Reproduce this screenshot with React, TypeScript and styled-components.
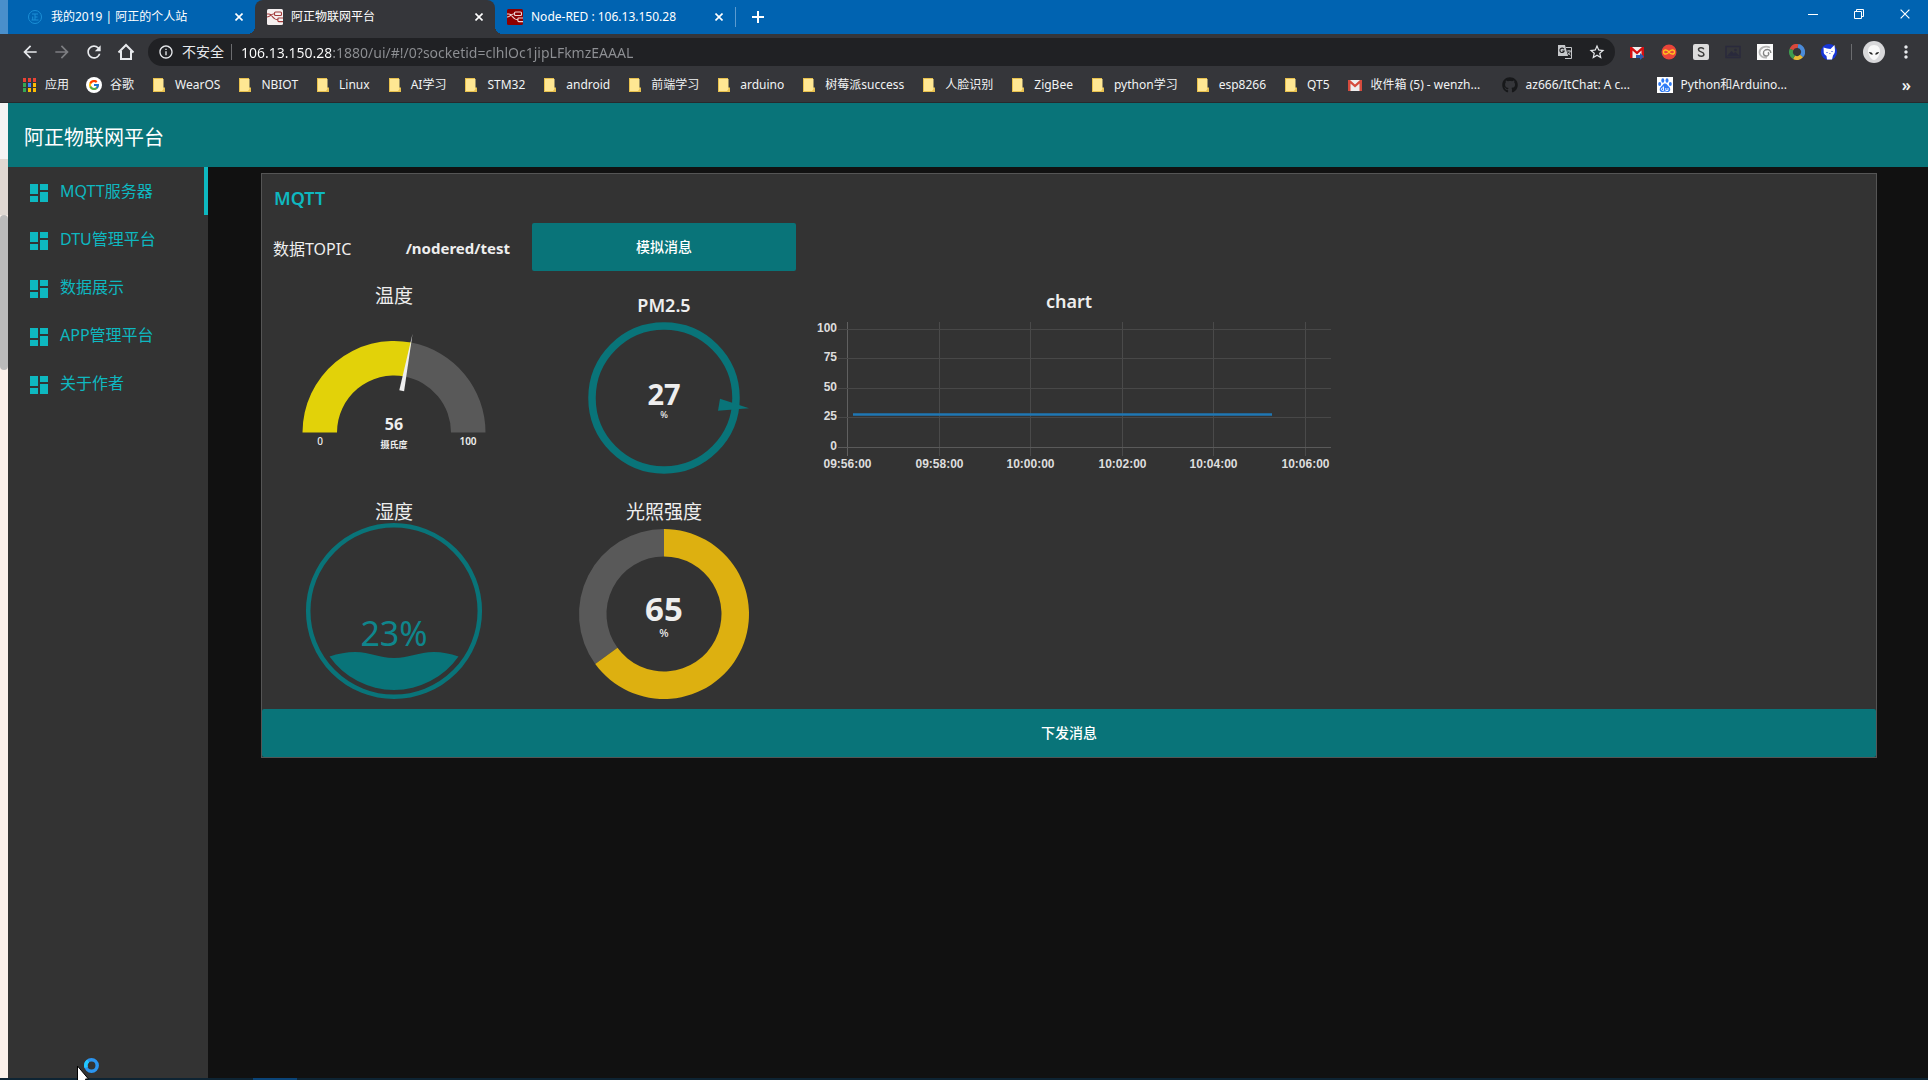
import React from "react";
import styled, { createGlobalStyle } from "styled-components";
import {
  MdArrowBack,
  MdArrowForward,
  MdDashboard,
  MdInfoOutline,
  MdMoreVert,
  MdRefresh,
  MdStarBorder,
} from "react-icons/md";
import { FcGoogle } from "react-icons/fc";
import { FaGithub } from "react-icons/fa";

const color = {
  frame: "#0063b1",
  toolbar: "#35363a",
  omnibox: "#202124",
  teal: "#097479",
  accent: "#0eb8c0",
  panel: "#333333",
  page: "#111111",
  line: "#555555",
  text: "#eeeeee",
  track: "#595959",
};

const GlobalStyle = createGlobalStyle`
  * { box-sizing: border-box; }
  body {
    margin: 0;
    background: ${color.page};
    color: ${color.text};
    font-family: "Noto Sans", "Noto Sans CJK SC", sans-serif;
    font-size: 16px;
  }
  button { border: 0; padding: 0; background: none; color: inherit; font: inherit; cursor: pointer; }
  a { color: inherit; text-decoration: none; }
  svg { display: block; flex: none; }
`;

const Screen = styled.div`
  display: flex;
  flex-direction: column;
  min-height: 100vh;
  overflow: hidden;
`;

/* ---------- browser frame ---------- */

const TabStrip = styled.div`
  display: flex;
  height: 34px;
  background: ${color.frame};
  color: #fff;
  font-size: 12px;
`;

const FrameEdge = styled.div`
  width: 8px;
  margin-right: 7px;
  background: #4a8fcb;
`;

const Tab = styled.div<{ $active?: boolean }>`
  position: relative;
  display: flex;
  align-items: center;
  width: 240px;
  height: 34px;
  padding: 0 8px 0 12px;
  border-radius: 8px 8px 0 0;
  background: ${(p) => (p.$active ? color.toolbar : "transparent")};

  &::before,
  &::after {
    content: "";
    display: ${(p) => (p.$active ? "block" : "none")};
    position: absolute;
    bottom: 0;
    width: 8px;
    height: 8px;
  }
  &::before {
    left: -8px;
    background: radial-gradient(circle at 0 0, transparent 8px, ${color.toolbar} 8px);
  }
  &::after {
    right: -8px;
    background: radial-gradient(circle at 100% 0, transparent 8px, ${color.toolbar} 8px);
  }
`;

const TabTitle = styled.span`
  flex: 1;
  margin-left: 8px;
  line-height: 18px;
  white-space: nowrap;
`;

const IconButton = styled.button<{ $w?: number; $h?: number }>`
  display: flex;
  align-items: center;
  justify-content: center;
  flex: none;
  width: ${(p) => p.$w ?? 32}px;
  height: ${(p) => p.$h ?? 28}px;
`;

const TabDivider = styled.div`
  width: 1px;
  height: 20px;
  margin: 7px 4px 0 0;
  background: #5b9bd0;
`;

const WindowButtons = styled.div`
  display: flex;
  margin-left: auto;
`;

const Toolbar = styled.div`
  display: flex;
  align-items: center;
  height: 36px;
  padding: 0 12px 0 14px;
  background: ${color.toolbar};
  color: #e8eaed;
`;

const Omnibox = styled.div`
  display: flex;
  align-items: center;
  flex: 1;
  height: 28px;
  margin: 0 6px;
  padding: 0 2px 0 10px;
  border-radius: 14px;
  background: ${color.omnibox};
  font-size: 14px;
`;

const Unsafe = styled.button`
  display: flex;
  align-items: center;
  gap: 8px;
  height: 28px;
  padding-right: 7px;
  line-height: 20px;
`;

const Rule = styled.div<{ $gap?: number }>`
  width: 1px;
  height: 16px;
  margin-left: ${(p) => p.$gap ?? 0}px;
  background: #6b6c6f;
`;

const Address = styled.input`
  flex: 1;
  min-width: 0;
  height: 24px;
  margin-left: 9px;
  padding: 0;
  border: 0;
  outline: 0;
  font: inherit;
  color: #ffffff;
  background: linear-gradient(to right, #ffffff 90px, #8e9094 90px);
  -webkit-background-clip: text;
  background-clip: text;
  -webkit-text-fill-color: transparent;
`;

const Bookmarks = styled.nav`
  display: flex;
  align-items: center;
  gap: 17px;
  height: 33px;
  padding: 0 17px 2px 21px;
  border-bottom: 1px solid #28292c;
  background: ${color.toolbar};
  color: #f1f3f4;
  font-size: 12px;
`;

const Bookmark = styled.a<{ $page?: boolean }>`
  display: flex;
  align-items: center;
  gap: 8px;
  min-width: ${(p) => (p.$page ? 138 : 0)}px;
  line-height: 18px;
  white-space: nowrap;
`;

const Overflow = styled.button`
  margin-left: auto;
  font-size: 16px;
  font-weight: 600;
  line-height: 18px;
`;

/* ---------- dashboard ---------- */

const Body = styled.div`
  display: flex;
  flex: 1;
`;

const Behind = styled.div`
  display: flex;
  flex-direction: column;
  width: 8px;
  background: #faf0ea;
`;

const BehindPart = styled.div<{ $bg: string; $h: number; $round?: boolean }>`
  height: ${(p) => p.$h}px;
  border-radius: ${(p) => (p.$round ? 4 : 0)}px;
  background: ${(p) => p.$bg};
`;

const Site = styled.div`
  display: flex;
  flex-direction: column;
  flex: 1;
`;

const SiteHeader = styled.header`
  display: flex;
  align-items: center;
  height: 64px;
  padding: 6px 16px 0;
  background: ${color.teal};
  color: #fff;
`;

const SiteTitle = styled.h1`
  margin: 0;
  font-size: 20px;
  font-weight: 400;
  line-height: 28px;
`;

const Columns = styled.div`
  display: flex;
  flex: 1;
`;

const Menu = styled.nav`
  flex: none;
  width: 200px;
  background: ${color.panel};
`;

const MenuItem = styled.a<{ $active?: boolean }>`
  display: flex;
  align-items: center;
  gap: 9px;
  height: 48px;
  padding-left: 19px;
  border-right: 4px solid ${(p) => (p.$active ? color.accent : "transparent")};
  color: ${color.accent};
  line-height: 24px;

  svg { margin-top: 4px; }
`;

const Main = styled.main`
  flex: 1;
  padding: 6px 51px 0 53px;
`;

const Panel = styled.section`
  border: 1px solid ${color.line};
  background: ${color.panel};
`;

const PanelTitle = styled.h2`
  height: 49px;
  margin: 0;
  padding: 0 12px;
  color: ${color.accent};
  font-size: 18px;
  font-weight: 600;
  line-height: 49px;
`;

const Widgets = styled.div`
  display: grid;
  grid-template-columns: 264px 264px 534px;
  grid-template-rows: 48px 210px 210px;
  gap: 6px;
`;

const Topic = styled.div`
  display: flex;
  align-items: center;
  justify-content: space-between;
  padding: 2px 16px 0 11px;
`;

const TopicValue = styled.strong`
  font-size: 15px;
`;

const Action = styled.button<{ $wide?: boolean }>`
  display: block;
  width: 100%;
  height: 48px;
  margin-top: ${(p) => (p.$wide ? 6 : 0)}px;
  padding-bottom: 2px;
  border-radius: 2px;
  background: ${color.teal};
  color: #fff;
  font-size: 14px;
  font-weight: 500;
`;

const Widget = styled.figure<{ $left?: boolean }>`
  display: grid;
  margin: 0;
  grid-column: ${(p) => (p.$left ? 1 : "auto")};

  > * { grid-area: 1 / 1; }
`;

const WidgetTitle = styled.figcaption<{ $line: number; $strong?: boolean }>`
  font-size: ${(p) => (p.$strong ? 18 : 19)}px;
  font-weight: ${(p) => (p.$strong ? 600 : 400)};
  line-height: ${(p) => p.$line}px;
  text-align: center;
`;

const Value = styled.text<{ $size: number; $weight?: number; $fill?: string }>`
  fill: ${(p) => p.$fill ?? color.text};
  font-size: ${(p) => p.$size}px;
  font-weight: ${(p) => p.$weight ?? 400};
  text-anchor: middle;
`;

const Unit = styled.tspan<{ $size: number }>`
  font-size: ${(p) => p.$size}px;
  font-weight: 500;
`;

const Tick = styled.text<{ $end?: boolean }>`
  fill: #dddddd;
  font-family: "Liberation Sans", Arial, sans-serif;
  font-size: 12px;
  font-weight: 700;
  text-anchor: ${(p) => (p.$end ? "end" : "middle")};
`;

const Taskbar = styled.div`
  display: flex;
  height: 2px;
  background: #0e2433;
`;

const TaskbarItem = styled.div`
  width: 44px;
  margin-left: 253px;
  background: #0a4478;
`;

const Pointer = styled.svg`
  position: fixed;
  left: 76px;
  bottom: 0;
  width: 26px;
  height: 24px;
  pointer-events: none;
`;

/* ---------- icons ---------- */

const CloseIcon = ({ size = 8, width = 1.6 }) => (
  <svg width={size} height={size} viewBox="0 0 8 8" stroke="#fff" strokeWidth={width} fill="none">
    <path d="M.5.5l7 7M7.5.5l-7 7" vectorEffect="non-scaling-stroke" />
  </svg>
);

const NodeRed = ({ bg, fg }: { bg: string; fg: string }) => (
  <svg width="16" height="16" viewBox="0 0 16 16" fill="none" stroke={fg} strokeWidth="1.1">
    <rect width="16" height="16" rx="1.500" fill={bg} stroke="none" />
    <rect x="7.500" y="3" width="7" height="3.500" rx="1" />
    <path d="M0 5h2C5 5 5.500 10.800 11 10.800M0 8c3.500 0 4-3.200 7.500-3.200" />
    <path d="M16 9h-4.300c-.6 0-.8.400-.8.800v2c0 .5.300.8.800.8H16" />
  </svg>
);

const SiteSeal = () => (
  <svg width="16" height="16" viewBox="0 0 16 16" fill="none" stroke="#1b8fd6" strokeWidth="1">
    <circle cx="8" cy="8" r="6.500" />
    <path d="M5 5h6M8 5v6M8 8h2.500M5.700 7.500V11M4.500 11h7" />
  </svg>
);

const HomeIcon = () => (
  <svg width="18" height="18" viewBox="0 0 18 18" fill="none" stroke="#e8eaed" strokeWidth="2">
    <path d="M1.500 9.500L9 2l7.500 7.500M4 8v8h10V8" />
  </svg>
);

const TranslateIcon = () => (
  <svg width="16" height="16" viewBox="0 0 16 16">
    <path d="M1 1h7l3 11H1z" fill="#c6c8cb" />
    <path d="M9 3.500h5.500v11H8" fill="none" stroke="#c6c8cb" />
    <path d="M7 5.200A2.200 2.200 0 1 0 7.200 7H5.300" fill="none" stroke="#202124" strokeWidth="1.100" />
    <path d="M10 7h4M12 6v1M13.300 7c-.4 2-1.500 3.300-3 4.200M10.800 8.500c.6 1.200 1.600 2 2.700 2.700" fill="none" stroke="#c6c8cb" strokeWidth=".9" />
  </svg>
);

const AppsIcon = () => {
  const fills = ["#ea4335", "#ea4335", "#ea4335", "#34a853", "#4285f4", "#fbbc04", "#34a853", "#fbbc04", "#fbbc04"];
  return (
    <svg width="16" height="16" viewBox="0 0 16 16">
      {fills.map((f, i) => (
        <rect key={i} x={2 + (i % 3) * 5} y={1 + Math.floor(i / 3) * 5} width="3" height="4" fill={f} />
      ))}
    </svg>
  );
};

const FolderIcon = () => (
  <svg width="16" height="16" viewBox="0 0 16 16">
    <path d="M2 1h10v9.500h2V15H2z" fill="#e8c14d" />
    <path d="M3 2h9.500v10L11 14H3z" fill="#ffe793" />
  </svg>
);

const GoogleIcon = () => (
  <svg width="16" height="16" viewBox="0 0 16 16">
    <circle cx="8" cy="8" r="8" fill="#fff" />
    <FcGoogle x="2" y="2" width="12" height="12" size={12} />
  </svg>
);

const GmailIcon = ({ arrow = false }) => (
  <svg width="16" height="16" viewBox="0 0 16 16">
    <path d="M1 3h14v11H1z" fill="#eee" />
    <path d="M1 3h2l5 4.500L13 3h2v11h-2.500V6.500L8 10.500 3.500 6.500V14H1z" fill={arrow ? "#d40f10" : "#d54b3d"} />
    {arrow && <path d="M7 11h4V9l4 3.500-4 3.500v-2H7z" fill="#2a5db0" />}
  </svg>
);

const BaiduIcon = () => (
  <svg width="16" height="16" viewBox="0 0 16 16" fill="#2f7cf6">
    <path d="M0 0h16v16H0z" fill="#fff" />
    <ellipse cx="5.800" cy="3.500" rx="1.500" ry="2.200" />
    <ellipse cx="10" cy="3.500" rx="1.500" ry="2.200" />
    <ellipse cx="2.700" cy="7" rx="1.500" ry="2" />
    <ellipse cx="13.300" cy="7" rx="1.500" ry="2" />
    <path d="M8 6.500c2 0 2.500 2 4 3.200 2.200 2 1.500 5.300-1.500 5.300-1 0-1.500-.4-2.500-.4S6.500 15 5.500 15c-3 0-3.700-3.300-1.500-5.300C5.500 8.500 6 6.500 8 6.500z" />
    <path d="M6.500 9.500v4H5.300a1.300 1.300 0 0 1 0-2.500h1.200M8.800 11v2.500h2.200V11" fill="none" stroke="#fff" strokeWidth=".9" />
  </svg>
);

const InfinityIcon = () => (
  <svg width="16" height="16" viewBox="0 0 16 16">
    <circle cx="8" cy="8" r="7.500" fill="#e9453a" />
    <path d="M8 8C6.500 5.500 2.500 5 2.500 8S6.500 10.500 8 8s5.500-3 5.500 0S9.500 10.500 8 8z" fill="none" stroke="#ffc31f" strokeWidth="1.400" />
  </svg>
);

const SIcon = () => (
  <svg width="16" height="16" viewBox="0 0 16 16">
    <rect width="16" height="16" rx="2" fill="#dcdcdc" />
    <path d="M10.800 5.300C10 3.200 5.500 3.300 5.500 5.700c0 2.600 5.400 1.700 5.400 4.500 0 2.700-4.900 2.600-5.700.2" fill="none" stroke="#3a3a3a" strokeWidth="1.500" />
  </svg>
);

const PictureIcon = () => (
  <svg width="16" height="16" viewBox="0 0 16 16" fill="none" stroke="#2a2a3c" strokeWidth="1.500">
    <rect x="1" y="2.500" width="14" height="11" />
    <path d="M3.500 11.500l3-3.500 2 2 2-1 2.500 2.500z" fill="#2a2a3c" />
    <circle cx="10.500" cy="6" r=".6" />
  </svg>
);

const SwirlIcon = () => (
  <svg width="16" height="16" viewBox="0 0 16 16" fill="none">
    <path d="M0 0h16v16H0z" fill="#fafafa" />
    <path d="M13 3.500C8 1 2.500 4 2.500 8.500c0 3.500 3.500 5.500 7.500 5" stroke="#b5b5b5" strokeWidth="1.800" />
    <path d="M13.800 9c.2-3-3-4.300-5.600-3-2.600 1.400-2.400 5.500.8 6 2.300.4 3.800-2.600 1.800-3.500" stroke="#858585" strokeWidth="1.400" />
  </svg>
);

const RingIcon = () => (
  <svg width="16" height="16" viewBox="0 0 16 16" fill="none" strokeWidth="4">
    <path d="M2.500 5.500A6 6 0 0 1 9 2" stroke="#d9483b" />
    <path d="M9 2a6 6 0 0 1 3.500 10" stroke="#4b8bd8" />
    <path d="M12.500 12A6 6 0 0 1 5 13.200" stroke="#e8b935" />
    <path d="M5 13.200A6 6 0 0 1 2.500 5.500" stroke="#3f9c4f" />
  </svg>
);

const CatIcon = () => (
  <svg width="16" height="16" viewBox="0 0 16 16">
    <circle cx="8" cy="8" r="8" fill="#1736d8" />
    <path d="M2.500 3.500L6 4.500l3.500.5L13.500 1l.5 5.500c0 3-1.500 4-2 5l-1 4H6L5.500 12C3 10.500 2.500 9 2.700 7z" fill="#fff" />
    <path d="M5.500 8.500h1M10.500 7.500h1M8.500 9.500h.8" stroke="#1736d8" />
  </svg>
);

const AvatarIcon = () => (
  <svg width="22" height="22" viewBox="0 0 22 22">
    <circle cx="11" cy="11" r="11" fill="#d8d8da" />
    <path d="M11 4c4 0 6 3 6 6s-3 9-6 9-6-6-6-9 2-6 6-6z" fill="#f8f8f8" />
    <path d="M6 11c2 0 3.500.8 4 2.500-2 .3-3.700-.7-4-2.500zM16 11c-2 0-3.500.8-4 2.500 2 .3 3.700-.7 4-2.500z" fill="#222" />
  </svg>
);

/* ---------- data ---------- */

type BookmarkEntry = { name: string; icon: React.ReactNode; page?: boolean };

const inFolders = (...names: string[]): BookmarkEntry[] =>
  names.map((name) => ({ name, icon: <FolderIcon /> }));

const bookmarks: BookmarkEntry[] = [
  { name: "应用", icon: <AppsIcon /> },
  { name: "谷歌", icon: <GoogleIcon /> },
  ...inFolders("WearOS", "NBIOT", "Linux", "AI学习", "STM32", "android", "前端学习", "arduino"),
  ...inFolders("树莓派success", "人脸识别", "ZigBee", "python学习", "esp8266", "QT5"),
  { name: "收件箱 (5) - wenzh...", icon: <GmailIcon />, page: true },
  { name: "az666/ItChat: A c...", icon: <FaGithub size={16} color="#17181a" />, page: true },
  { name: "Python和Arduino...", icon: <BaiduIcon />, page: true },
];

const tabs = [
  { title: "我的2019 | 阿正的个人站", icon: <SiteSeal /> },
  { title: "阿正物联网平台", icon: <NodeRed bg="#f6f0f0" fg="#a23a3a" />, active: true },
  { title: "Node-RED : 106.13.150.28", icon: <NodeRed bg="#8f0000" fg="#f0d6d6" /> },
];

const extensions: [string, React.ReactNode][] = [
  ["Gmail", <GmailIcon arrow />],
  ["Infinity", <InfinityIcon />],
  ["S", <SIcon />],
  ["Picture", <PictureIcon />],
  ["Swirl", <SwirlIcon />],
  ["Ring", <RingIcon />],
  ["Cat", <CatIcon />],
];

const menu = ["MQTT服务器", "DTU管理平台", "数据展示", "APP管理平台", "关于作者"];

/* ---------- gauges and chart ---------- */

/** Ring segment between two angles, in degrees clockwise from twelve o'clock. */
function segment(cx: number, cy: number, outer: number, inner: number, from: number, to: number) {
  const at = (r: number, deg: number) => {
    const a = ((deg - 90) * Math.PI) / 180;
    return `${(cx + r * Math.cos(a)).toFixed(2)} ${(cy + r * Math.sin(a)).toFixed(2)}`;
  };
  const large = to - from > 180 ? 1 : 0;
  return `M${at(outer, from)}A${outer} ${outer} 0 ${large} 1 ${at(outer, to)}L${at(inner, to)}A${inner} ${inner} 0 ${large} 0 ${at(inner, from)}Z`;
}

const Temperature = ({ value }: { value: number }) => {
  const split = -90 + value * 1.8;
  return (
    <Widget>
      <WidgetTitle $line={38}>温度</WidgetTitle>
      <svg width="264" height="210" viewBox="0 0 264 210">
        <path d={segment(132, 155.5, 91.5, 57, split, 90)} fill={color.track} />
        <path d={segment(132, 155.5, 91.5, 57, -90, split)} fill="#e2d209" />
        <path d="M150.500 57L137.300 113.200l4.800 1z" fill={color.text} />
        <Value x="132" y="153" $size={16} $weight={700}>{value}</Value>
        <Value x="132" y="171" $size={9} $weight={600}>摄氏度</Value>
        <Value x="58" y="168" $size={10} $weight={500}>0</Value>
        <Value x="206" y="168" $size={10} $weight={600}>100</Value>
      </svg>
    </Widget>
  );
};

const Compass = ({ value }: { value: number }) => (
  <Widget>
    <WidgetTitle $line={56} $strong>PM2.5</WidgetTitle>
    <svg width="264" height="210" viewBox="0 0 264 210">
      <circle cx="132" cy="121" r="72" fill="none" stroke={color.teal} strokeWidth="7.500" />
      <path d="M188 121.700L217 131.300l-31 2.500z" fill={color.teal} />
      <Value x="132" y="128" $size={29} $weight={700}>
        {value}
        <Unit x="132" y="141" $size={9}>%</Unit>
      </Value>
    </svg>
  </Widget>
);

const Humidity = ({ value }: { value: number }) => (
  <Widget $left>
    <WidgetTitle $line={38}>湿度</WidgetTitle>
    <svg width="264" height="210" viewBox="0 0 264 210">
      <circle cx="132" cy="118" r="85.800" fill="none" stroke={color.teal} strokeWidth="4.500" />
      <path
        d="M67.500 163.500C76 160.500 85 159 93 159c16 0 23 6 39 6s24-6 40-6c8 0 16 1.500 24.500 4.500A79 79 0 0 1 67.500 163.500z"
        fill={color.teal}
      />
      <Value x="132" y="153" $size={34} $fill="#0f868c">{value}%</Value>
    </svg>
  </Widget>
);

const Light = ({ value }: { value: number }) => (
  <Widget>
    <WidgetTitle $line={38}>光照强度</WidgetTitle>
    <svg width="264" height="210" viewBox="0 0 264 210">
      <path d={segment(132, 121, 85, 57.5, value * 3.6, 360)} fill={color.track} />
      <path d={segment(132, 121, 85, 57.5, 0, value * 3.6)} fill="#ddb010" />
      <Value x="132" y="128" $size={33} $weight={700}>
        {value}
        <Unit x="132" y="144" $size={11}>%</Unit>
      </Value>
    </svg>
  </Widget>
);

const times = ["09:56:00", "09:58:00", "10:00:00", "10:02:00", "10:04:00", "10:06:00"];

const Chart = () => (
  <Widget>
    <WidgetTitle $line={48} $strong>chart</WidgetTitle>
    <svg width="534" height="210" viewBox="0 0 534 210">
      {times.map((t, i) => {
        const x = Math.round(45 + i * 91.6) + 0.5;
        return (
          <g key={t}>
            <path d={`M${x} 45V179`} stroke={i ? "#4a4a4a" : "#606060"} />
            <Tick x={x} y="191">{t}</Tick>
          </g>
        );
      })}
      {[100, 75, 50, 25, 0].map((n, i) => {
        const y = Math.round(52 + i * 29.4) + 0.5;
        return (
          <g key={n}>
            <path d={`M36 ${y}H529`} stroke={n ? "#484848" : "#5a5a5a"} />
            <Tick $end x="35" y={y + 2}>{n}</Tick>
          </g>
        );
      })}
      <path d="M51 137.500H470" stroke="#1f77b4" strokeWidth="2.500" />
    </svg>
  </Widget>
);

/* ---------- page ---------- */

export default function App() {
  return (
    <Screen>
      <GlobalStyle />
      <TabStrip>
        <FrameEdge />
        {tabs.map((t) => (
          <Tab key={t.title} $active={t.active}>
            {t.icon}
            <TabTitle>{t.title}</TabTitle>
            <IconButton $w={16} aria-label="关闭标签页"><CloseIcon /></IconButton>
          </Tab>
        ))}
        <TabDivider />
        <IconButton $w={36} $h={34} aria-label="新标签页">
          <svg width="12" height="12" viewBox="0 0 12 12" stroke="#fff" strokeWidth="2"><path d="M6 0v12M0 6h12" /></svg>
        </IconButton>
        <WindowButtons>
          <IconButton $w={46} aria-label="最小化">
            <svg width="10" height="10" viewBox="0 0 10 10" stroke="#fff"><path d="M0 5.500h10" /></svg>
          </IconButton>
          <IconButton $w={46} aria-label="还原">
            <svg width="10" height="10" viewBox="0 0 10 10" stroke="#fff" fill="none"><path d="M.5 2.500h7v7h-7zM2.500 2.500v-2h7v7h-2" /></svg>
          </IconButton>
          <IconButton $w={46} aria-label="关闭"><CloseIcon size={10} width={1.2} /></IconButton>
        </WindowButtons>
      </TabStrip>

      <Toolbar>
        <IconButton aria-label="后退"><MdArrowBack size={20} /></IconButton>
        <IconButton aria-label="前进"><MdArrowForward size={20} color="#7d7e82" /></IconButton>
        <IconButton aria-label="刷新"><MdRefresh size={20} /></IconButton>
        <IconButton aria-label="主页"><HomeIcon /></IconButton>
        <Omnibox>
          <Unsafe><MdInfoOutline size={16} />不安全</Unsafe>
          <Rule />
          <Address aria-label="地址" defaultValue="106.13.150.28:1880/ui/#!/0?socketid=clhlOc1jipLFkmzEAAAL" />
          <IconButton aria-label="翻译"><TranslateIcon /></IconButton>
          <IconButton aria-label="收藏"><MdStarBorder size={18} /></IconButton>
        </Omnibox>
        {extensions.map(([name, icon]) => (
          <IconButton key={name} aria-label={name}>{icon}</IconButton>
        ))}
        <Rule $gap={6} />
        <IconButton $w={44} aria-label="用户"><AvatarIcon /></IconButton>
        <IconButton $w={20} aria-label="菜单"><MdMoreVert size={20} /></IconButton>
      </Toolbar>

      <Bookmarks>
        {bookmarks.map((b) => (
          <Bookmark key={b.name} href="#" $page={b.page}>{b.icon}{b.name}</Bookmark>
        ))}
        <Overflow aria-label="更多书签">»</Overflow>
      </Bookmarks>

      <Body>
        <Behind>
          <BehindPart $bg="#f4f4f4" $h={56} />
          <BehindPart $bg="#e0d9d3" $h={56} />
          <BehindPart $bg="#bbbbbb" $h={155} $round />
        </Behind>
        <Site>
          <SiteHeader><SiteTitle>阿正物联网平台</SiteTitle></SiteHeader>
          <Columns>
            <Menu>
              {menu.map((name, i) => (
                <MenuItem key={name} href="#" $active={i === 0}>
                  <MdDashboard size={24} />
                  {name}
                </MenuItem>
              ))}
            </Menu>
            <Main>
              <Panel>
                <PanelTitle>MQTT</PanelTitle>
                <Widgets>
                  <Topic><span>数据TOPIC</span><TopicValue>/nodered/test</TopicValue></Topic>
                  <Action>模拟消息</Action>
                  <span />
                  <Temperature value={56} />
                  <Compass value={27} />
                  <Chart />
                  <Humidity value={23} />
                  <Light value={65} />
                </Widgets>
                <Action $wide>下发消息</Action>
              </Panel>
            </Main>
          </Columns>
        </Site>
      </Body>
      <Taskbar><TaskbarItem /></Taskbar>
      <Pointer viewBox="0 0 26 24">
        <circle cx="15.500" cy="9.500" r="5.700" fill="none" stroke="#2b95f0" strokeWidth="3.500" />
        <path d="M10.200 11.500a5.700 5.700 0 0 1 2-6.500" fill="none" stroke="#22c8ff" strokeWidth="3.500" />
        <path d="M1.500 10v18l4-4 3 5 3-1-2-5h3z" fill="#fff" stroke="#000" />
      </Pointer>
    </Screen>
  );
}
